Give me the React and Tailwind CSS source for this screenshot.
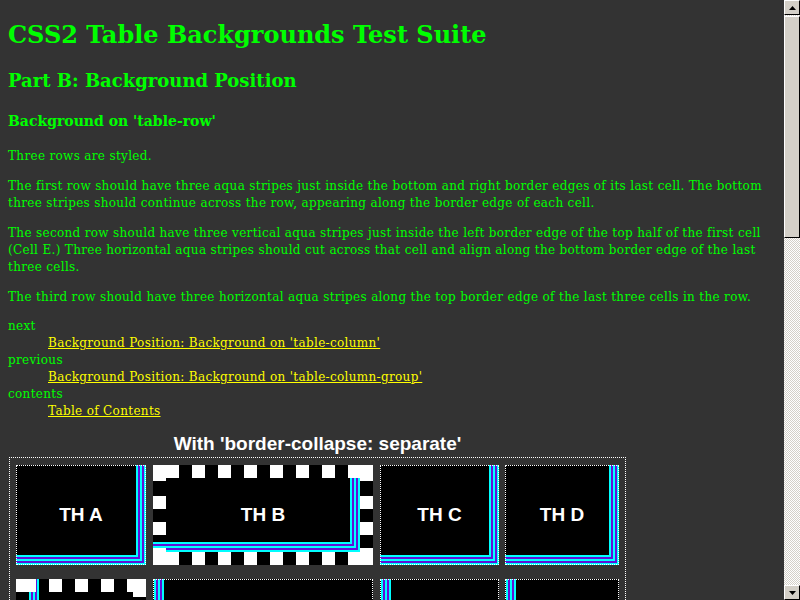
import React from "react";

const CY = "#00ffff";
const PU = "#6010d8";

function StripesBR({ w, h, R, B }) {
  const rects = [];
  for (let i = 0; i < 5; i++) {
    const o = 2 * i;
    const c = i % 2 === 0 ? CY : PU;
    rects.push(<rect key={"v" + i} x={R - o - 2} y={0} width={2} height={B - o} fill={c} />);
    rects.push(<rect key={"h" + i} x={0} y={B - o - 2} width={R - o} height={2} fill={c} />);
  }
  return (
    <svg className="absolute left-0 top-0" width={w} height={h}>
      {rects}
    </svg>
  );
}

function StripesL({ w, h, L }) {
  const rects = [];
  for (let i = 0; i < 5; i++) {
    const c = i % 2 === 0 ? CY : PU;
    rects.push(<rect key={i} x={L + 2 * i} y={0} width={2} height={h} fill={c} />);
  }
  return (
    <svg className="absolute left-0 top-0" width={w} height={h}>
      {rects}
    </svg>
  );
}

function CheckerB() {
  const tops = [[0, 26], [39, 13], [65, 13], [91, 13], [117, 13], [143, 13], [169, 13], [195, 25]];
  const sides = [[0, 16], [31, 13], [57, 13], [83, 17]];
  return (
    <svg className="absolute left-0 top-0" width={220} height={100}>
      {tops.map(([x, wd], i) => (
        <rect key={"t" + i} x={x} y={0} width={wd} height={13} fill="#fff" />
      ))}
      {tops.map(([x, wd], i) => (
        <rect key={"b" + i} x={x} y={87} width={wd} height={13} fill="#fff" />
      ))}
      {sides.map(([y, ht], i) => (
        <rect key={"l" + i} x={0} y={y} width={13} height={ht} fill="#fff" />
      ))}
      {sides.map(([y, ht], i) => (
        <rect key={"r" + i} x={207} y={y} width={13} height={ht} fill="#fff" />
      ))}
    </svg>
  );
}

function CheckerE() {
  const tops = [[0, 20], [33, 13], [59, 13], [85, 13], [111, 19]];
  return (
    <svg className="absolute left-0 top-0" width={130} height={100}>
      {tops.map(([x, wd], i) => (
        <rect key={"t" + i} x={x} y={0} width={wd} height={13} fill="#fff" />
      ))}
      <rect x={117} y={13} width={13} height={5} fill="#fff" />
    </svg>
  );
}

function Dotted() {
  return <div className="absolute inset-0 border border-dotted border-white" />;
}

function Label({ children }) {
  return (
    <div className="relative flex h-full w-full items-center justify-center font-['Liberation_Sans',Arial,sans-serif] text-[19px] font-bold text-white">
      {children}
    </div>
  );
}

function UpArrow() {
  return (
    <svg width="7" height="4" viewBox="0 0 7 4">
      <polygon points="3.5,0 7,4 0,4" fill="#000" />
    </svg>
  );
}

function DownArrow() {
  return (
    <svg width="7" height="4" viewBox="0 0 7 4">
      <polygon points="0,0 7,0 3.5,4" fill="#000" />
    </svg>
  );
}

function Scrollbar() {
  return (
    <div className="flex h-[600px] w-[16px] flex-col bg-[repeating-conic-gradient(#ffffff_0_25%,#d4d0c8_0_50%)] bg-[length:2px_2px]">
      <div className="flex h-[15px] items-center justify-center border-t border-l border-t-white border-l-white border-r border-b border-r-black border-b-black bg-[#d4d0c8]">
        <UpArrow />
      </div>
      <div className="mt-[1px] h-[222px] border-t border-l border-t-white border-l-white border-r border-b border-r-black border-b-black bg-[#d4d0c8]" />
      <div className="flex-1" />
      <div className="flex h-[15px] items-center justify-center border-t border-l border-t-white border-l-white border-r border-b border-r-black border-b-black bg-[#d4d0c8]">
        <DownArrow />
      </div>
    </div>
  );
}

export default function App() {
  return (
    <div className="flex h-[600px] w-[800px] overflow-hidden bg-[#333333]">
      <div className="h-[600px] flex-1 overflow-hidden px-[8px] font-['DejaVu_Serif',serif] text-[#00ff00]">
        <h1 className="mt-[20px] text-[24px] leading-[30px] font-bold">CSS2 Table Backgrounds Test Suite</h1>
        <h2 className="mt-[19px] text-[18px] leading-[24px] font-bold">Part B: Background Position</h2>
        <h3 className="mt-[19px] text-[14px] leading-[19px] font-bold">Background on 'table-row'</h3>
        <p className="mt-[17px] text-[12px] leading-[17px] tracking-[0.33px]">Three rows are styled.</p>
        <p className="mt-[13px] text-[12px] leading-[17px] tracking-[0.33px]">
          The first row should have three aqua stripes just inside the bottom and right border edges of its last cell. The bottom three stripes should continue across the row, appearing along the border edge of each cell.
        </p>
        <p className="mt-[13px] text-[12px] leading-[17px] tracking-[0.33px]">
          The second row should have three vertical aqua stripes just inside the left border edge of the top half of the first cell (Cell E.) Three horizontal aqua stripes should cut across that cell and align along the bottom border edge of the last three cells.
        </p>
        <p className="mt-[13px] text-[12px] leading-[17px] tracking-[0.33px]">
          The third row should have three horizontal aqua stripes along the top border edge of the last three cells in the row.
        </p>
        <dl className="mt-[12px] text-[12px] leading-[17px] tracking-[0.33px]">
          <dt>next</dt>
          <dd className="ml-[40px]">
            <a className="text-[#ffff00] underline">Background Position: Background on 'table-column'</a>
          </dd>
          <dt>previous</dt>
          <dd className="ml-[40px]">
            <a className="text-[#ffff00] underline">Background Position: Background on 'table-column-group'</a>
          </dd>
          <dt>contents</dt>
          <dd className="ml-[40px]">
            <a className="text-[#ffff00] underline">Table of Contents</a>
          </dd>
        </dl>
        <div className="ml-[1px] mt-[13px] w-[617px]">
          <div className="h-[22px] text-center font-['Liberation_Sans',Arial,sans-serif] text-[19px] leading-[22px] font-bold text-white">
            With 'border-collapse: separate'
          </div>
          <div className="mt-[2px] border border-dotted border-white px-[6px] pt-[7px]">
            <div className="flex h-[100px]">
              <div className="relative h-[100px] w-[130px] bg-black">
                <StripesBR w={130} h={100} R={130} B={100} />
                <Dotted />
                <Label>TH A</Label>
              </div>
              <div className="relative ml-[7px] h-[100px] w-[220px] bg-black">
                <StripesBR w={220} h={100} R={207} B={87} />
                <CheckerB />
                <Label>TH B</Label>
              </div>
              <div className="relative ml-[7px] h-[100px] w-[119px] bg-black">
                <StripesBR w={119} h={100} R={119} B={100} />
                <Dotted />
                <Label>TH C</Label>
              </div>
              <div className="relative ml-[6px] h-[100px] w-[114px] bg-black">
                <StripesBR w={114} h={100} R={114} B={100} />
                <Dotted />
                <Label>TH D</Label>
              </div>
            </div>
            <div className="mt-[14px] flex h-[100px]">
              <div className="relative h-[100px] w-[130px] bg-black">
                <StripesL w={130} h={100} L={13} />
                <CheckerE />
              </div>
              <div className="relative ml-[7px] h-[100px] w-[220px] bg-black">
                <StripesL w={220} h={100} L={1} />
                <Dotted />
              </div>
              <div className="relative ml-[7px] h-[100px] w-[119px] bg-black">
                <StripesL w={119} h={100} L={1} />
                <Dotted />
              </div>
              <div className="relative ml-[6px] h-[100px] w-[114px] bg-black">
                <StripesL w={114} h={100} L={1} />
                <Dotted />
              </div>
            </div>
          </div>
        </div>
      </div>
      <Scrollbar />
    </div>
  );
}
